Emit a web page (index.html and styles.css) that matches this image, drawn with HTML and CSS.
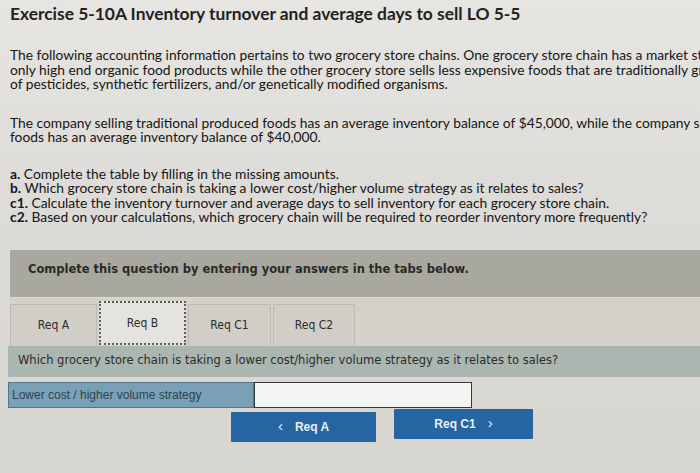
FILE: index.html
```html
<!DOCTYPE html>
<html>
<head>
<meta charset="utf-8">
<link rel="stylesheet" href="styles.css">
</head>
<body>
<div class="page">
  <h1 class="title">Exercise 5-10A Inventory turnover and average days to sell LO 5-5</h1>
  <p class="para">The following accounting information pertains to two grocery store chains. One grocery store chain has a market strategy of selling<br>only high end organic food products while the other grocery store sells less expensive foods that are traditionally grown with the use<br>of pesticides, synthetic fertilizers, and/or genetically modified organisms.</p>
  <p class="para">The company selling traditional produced foods has an average inventory balance of $45,000, while the company selling organic<br>foods has an average inventory balance of $40,000.</p>
  <div class="reqs">
    <div><b>a.</b> Complete the table by filling in the missing amounts.</div>
    <div><b>b.</b> Which grocery store chain is taking a lower cost/higher volume strategy as it relates to sales?</div>
    <div><b>c1.</b> Calculate the inventory turnover and average days to sell inventory for each grocery store chain.</div>
    <div><b>c2.</b> Based on your calculations, which grocery chain will be required to reorder inventory more frequently?</div>
  </div>
  <div class="band">Complete this question by entering your answers in the tabs below.</div>
  <div class="tabs">
    <div class="tab tab-a">Req A</div>
    <div class="tab tab-b active">Req B</div>
    <div class="tab tab-c1">Req C1</div>
    <div class="tab tab-c2">Req C2</div>
  </div>
  <div class="question">Which grocery store chain is taking a lower cost/higher volume strategy as it relates to sales?</div>
  <div class="answer">
    <div class="label">Lower cost / higher volume strategy</div>
    <div class="input"></div>
  </div>
  <div class="nav">
    <div class="btn btn-prev"><span class="chev">&lsaquo;</span><span>Req A</span></div>
    <div class="btn btn-next"><span>Req C1</span><span class="chev">&rsaquo;</span></div>
  </div>
</div>
</body>
</html>
```
FILE: styles.css
```css
html, body {
  margin: 0;
  padding: 0;
}
body {
  width: 700px;
  height: 473px;
  overflow: hidden;
  background: linear-gradient(180deg, #e6e5e1 0%, #dddcd8 40%, #d6d5cf 100%);
  font-family: Lato, "Open Sans", sans-serif;
  color: #161616;
}
.page {
  padding-left: 10px;
}
.title {
  margin: 4px 0 0;
  font-size: 17.4px;
  line-height: 20px;
  font-weight: bold;
  color: #222;
  white-space: nowrap;
}
.para {
  margin: 24px 0 0;
  font-size: 13.8px;
  line-height: 14.5px;
  white-space: nowrap;
  overflow: hidden;
}
.reqs {
  margin-top: 22px;
  font-size: 13.8px;
  line-height: 14.5px;
  white-space: nowrap;
}
.band {
  margin-top: 25px;
  height: 47px;
  box-sizing: border-box;
  padding: 12px 0 0 18px;
  background: #a9a89e;
  font-family: "DejaVu Sans", Verdana, sans-serif;
  font-size: 11.5px;
  font-weight: bold;
  color: #2a2a28;
}
.tabs {
  margin-top: 1px;
  height: 48px;
  box-sizing: border-box;
  padding-top: 6px;
  display: flex;
  gap: 2px;
  background: #d3d1ca;
}
.tab {
  box-sizing: border-box;
  height: 42px;
  display: flex;
  align-items: center;
  justify-content: center;
  font-family: "DejaVu Sans Condensed", "DejaVu Sans", sans-serif;
  font-size: 12px;
  color: #2c2c2c;
  background: #d0cec7;
  border: 1px solid #bcbab3;
  border-bottom: none;
}
.tab-a { width: 87px; }
.tab-b { width: 87px; }
.tab-c1 { width: 83px; }
.tab-c2 { width: 82px; }
.tab.active {
  background: #e4e3de;
  border: 2px dotted #5c5c5c;
  height: 44px;
  margin-top: -3px;
}
.question {
  margin-left: -2px;
  height: 31px;
  box-sizing: border-box;
  padding: 7px 0 0 10px;
  background: #abb6b0;
  font-family: "DejaVu Sans", Verdana, sans-serif;
  font-size: 11.5px;
  color: #2a2c2b;
  white-space: nowrap;
}
.answer {
  margin: 5px 0 0 -2px;
  display: flex;
  width: 464px;
  height: 26px;
}
.label {
  width: 246px;
  box-sizing: border-box;
  padding: 5px 0 0 3px;
  background: #7aa0b7;
  border: 1px solid #55758a;
  font-family: "Liberation Sans", Arial, sans-serif;
  font-size: 12px;
  color: #2c4352;
}
.input {
  flex: 1;
  background: #f4f4f2;
  border: 1px solid #34393c;
}
.nav {
  margin: 4px 0 0 221px;
  display: flex;
  gap: 18px;
}
.btn {
  height: 30px;
  display: flex;
  align-items: center;
  justify-content: center;
  gap: 12px;
  background: #2566a2;
  border-radius: 1px;
  font-family: "Liberation Sans", Arial, sans-serif;
  font-size: 12px;
  font-weight: bold;
  color: #e8eef4;
}
.btn-prev { width: 145px; }
.btn-next { width: 139px; margin-top: -3px; }
.chev {
  font-weight: normal;
  font-size: 15px;
  line-height: 1;
  margin-top: -2px;
}
```
